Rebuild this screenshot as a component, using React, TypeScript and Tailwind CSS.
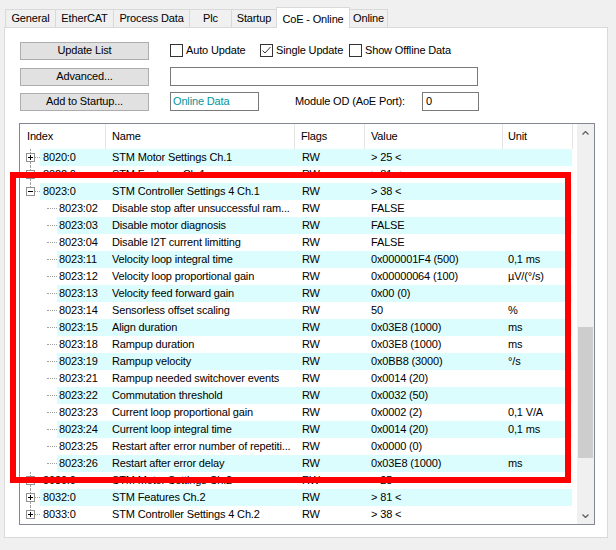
import React from "react";

type Row = {
  idx: string;
  name: string;
  value: string;
  unit?: string;
  level: 0 | 1;
  sign?: "+" | "-";
  up?: boolean;
  down?: boolean;
};

const rows: Row[] = [
  { idx: "8020:0", name: "STM Motor Settings Ch.1", value: "> 25 <", level: 0, sign: "+", up: true, down: true },
  { idx: "8022:0", name: "STM Features Ch.1", value: "> 81 <", level: 0, sign: "+", up: true, down: true },
  { idx: "8023:0", name: "STM Controller Settings 4 Ch.1", value: "> 38 <", level: 0, sign: "-", up: true },
  { idx: "8023:02", name: "Disable stop after unsuccessful ram...", value: "FALSE", level: 1 },
  { idx: "8023:03", name: "Disable motor diagnosis", value: "FALSE", level: 1 },
  { idx: "8023:04", name: "Disable I2T current limitting", value: "FALSE", level: 1 },
  { idx: "8023:11", name: "Velocity loop integral time", value: "0x000001F4 (500)", unit: "0,1 ms", level: 1 },
  { idx: "8023:12", name: "Velocity loop proportional gain", value: "0x00000064 (100)", unit: "µV/(°/s)", level: 1 },
  { idx: "8023:13", name: "Velocity feed forward gain", value: "0x00 (0)", level: 1 },
  { idx: "8023:14", name: "Sensorless offset scaling", value: "50", unit: "%", level: 1 },
  { idx: "8023:15", name: "Align duration", value: "0x03E8 (1000)", unit: "ms", level: 1 },
  { idx: "8023:18", name: "Rampup duration", value: "0x03E8 (1000)", unit: "ms", level: 1 },
  { idx: "8023:19", name: "Rampup velocity", value: "0x0BB8 (3000)", unit: "°/s", level: 1 },
  { idx: "8023:21", name: "Rampup needed switchover events", value: "0x0014 (20)", level: 1 },
  { idx: "8023:22", name: "Commutation threshold", value: "0x0032 (50)", level: 1 },
  { idx: "8023:23", name: "Current loop proportional gain", value: "0x0002 (2)", unit: "0,1 V/A", level: 1 },
  { idx: "8023:24", name: "Current loop integral time", value: "0x0014 (20)", unit: "0,1 ms", level: 1 },
  { idx: "8023:25", name: "Restart after error number of repetiti...", value: "0x0000 (0)", level: 1 },
  { idx: "8023:26", name: "Restart after error delay", value: "0x03E8 (1000)", unit: "ms", level: 1 },
  { idx: "8030:0", name: "STM Motor Settings Ch.2", value: "> 25 <", level: 0, sign: "+", up: true, down: true },
  { idx: "8032:0", name: "STM Features Ch.2", value: "> 81 <", level: 0, sign: "+", up: true, down: true },
  { idx: "8033:0", name: "STM Controller Settings 4 Ch.2", value: "> 38 <", level: 0, sign: "+", up: true },
];

const tabs = [
  { label: "General", w: "w-[50px]" },
  { label: "EtherCAT", w: "w-[58px]" },
  { label: "Process Data", w: "w-[76px]" },
  { label: "Plc", w: "w-[42px]" },
  { label: "Startup", w: "w-[45px]" },
];

function ExpandBox({ sign }: { sign: "+" | "-" }) {
  return (
    <svg width="9" height="9" viewBox="0 0 9 9" className="block">
      <rect x="0.5" y="0.5" width="8" height="8" fill="#fff" stroke="#919191" />
      <line x1="2" y1="4.5" x2="7" y2="4.5" stroke="#000" />
      {sign === "+" ? <line x1="4.5" y1="2" x2="4.5" y2="7" stroke="#000" /> : null}
    </svg>
  );
}

function Checkbox({ checked }: { checked?: boolean }) {
  return (
    <div className="w-[13px] h-[13px] border border-[#333333] bg-white shrink-0 flex items-center justify-center">
      {checked ? (
        <svg width="11" height="11" viewBox="0 0 11 11">
          <polyline points="1.5,5.5 4,8 9.5,2" fill="none" stroke="#333" strokeWidth="1" />
        </svg>
      ) : null}
    </div>
  );
}

function Button({ children }: { children: React.ReactNode }) {
  return (
    <div className="w-[129px] h-[18px] shrink-0 border border-[#adadad] bg-[#e1e1e1] flex items-center justify-center leading-none">
      {children}
    </div>
  );
}

function TreeGutter({ row }: { row: Row }) {
  if (row.level === 1) {
    return (
      <div className="w-[37px] h-[17px] shrink-0 flex items-center">
        <div className="ml-[27px] w-[10px] border-t border-dotted border-[#a0a0a0]" />
      </div>
    );
  }
  return (
    <div className="w-[20px] h-[17px] shrink-0 flex">
      <div className="ml-[6px] w-[9px] flex flex-col items-center">
        <div className={`h-[4px] w-0 ${row.up ? "border-l border-dotted border-[#a0a0a0]" : ""}`} />
        <ExpandBox sign={row.sign ?? "+"} />
        <div className={`h-[4px] w-0 ${row.down ? "border-l border-dotted border-[#a0a0a0]" : ""}`} />
      </div>
      <div className="flex items-center">
        <div className="w-[5px] border-t border-dotted border-[#a0a0a0]" />
      </div>
    </div>
  );
}

function Chevron({ down }: { down?: boolean }) {
  return (
    <svg width="7" height="4" viewBox="0 0 7 4">
      <polyline
        points={down ? "0.5,0.5 3.5,3.5 6.5,0.5" : "0.5,3.5 3.5,0.5 6.5,3.5"}
        fill="none"
        stroke="#606060"
        strokeWidth="1.3"
      />
    </svg>
  );
}

export default function App() {
  return (
    <div className="relative w-[616px] h-[550px] overflow-hidden bg-[#f0f0f0] text-[11px] text-black tracking-[-0.15px] font-['Liberation_Sans',Arial,sans-serif]">
      {/* tab strip */}
      <div className="flex items-end h-[27px] pl-[5px]">
        {tabs.map((t) => (
          <div
            key={t.label}
            className={`${t.w} h-[18px] border-l border-t border-[#d9d9d9] bg-[#f0f0f0] flex items-center justify-center`}
          >
            {t.label}
          </div>
        ))}
        <div className="relative z-10 w-[74px] h-[21px] -mb-[1px] border-x border-t border-[#d9d9d9] bg-white flex items-start justify-center pt-[3px]">
          CoE - Online
        </div>
        <div className="w-[38px] h-[18px] border-r border-t border-[#d9d9d9] bg-[#f0f0f0] flex items-center justify-center">
          Online
        </div>
      </div>

      {/* tab page */}
      <div className="ml-[4px] w-[604px] h-[511px] border border-[#d9d9d9] bg-white">
        <div className="pt-[13px] pl-[15px] flex flex-col">
          <div className="flex items-center h-[19px]">
            <Button>Update List</Button>
            <div className="ml-[21px] flex items-center w-[90px] gap-[3px]">
              <Checkbox />
              <span>Auto Update</span>
            </div>
            <div className="flex items-center w-[89px] gap-[3px]">
              <Checkbox checked />
              <span>Single Update</span>
            </div>
            <div className="flex items-center gap-[3px]">
              <Checkbox />
              <span>Show Offline Data</span>
            </div>
          </div>
          <div className="flex items-center h-[19px] mt-[7px]">
            <Button>Advanced...</Button>
            <div className="ml-[21px] w-[308px] h-[19px] border border-[#7a7a7a] bg-white" />
          </div>
          <div className="flex items-center h-[19px] mt-[6px]">
            <Button>Add to Startup...</Button>
            <div className="ml-[21px] w-[89px] h-[19px] border border-[#7a7a7a] bg-white flex items-center pl-[2px] text-[#0096a0]">
              Online Data
            </div>
            <div className="w-[163px] pl-[36px]">Module OD (AoE Port):</div>
            <div className="w-[57px] h-[19px] border border-[#7a7a7a] bg-white flex items-center pl-[3px]">
              0
            </div>
          </div>
        </div>

        {/* list view */}
        <div className="ml-[14px] mt-[12px] w-[576px] h-[402px] border border-[#828790] flex bg-white">
          <div className="w-[557px] flex flex-col overflow-hidden">
            <div className="h-[25px] shrink-0 flex">
              <div className="w-[86px] pl-[7px] border-r border-[#e5e5e5] flex items-center">Index</div>
              <div className="w-[189px] pl-[6px] border-r border-[#e5e5e5] flex items-center">Name</div>
              <div className="w-[70px] pl-[6px] border-r border-[#e5e5e5] flex items-center">Flags</div>
              <div className="w-[138px] pl-[6px] border-r border-[#e5e5e5] flex items-center">Value</div>
              <div className="w-[70px] pl-[5px] border-r border-[#e5e5e5] flex items-center">Unit</div>
            </div>
            {rows.map((r, i) => (
              <div key={r.idx} className="h-[17px] shrink-0 flex leading-[17px] whitespace-nowrap">
                <TreeGutter row={r} />
                <div className={`flex ${i % 2 === 0 ? "bg-[#dcfdfd]" : "bg-white"}`}>
                  <div className={r.level === 0 ? "w-[66px] pl-[3px]" : "w-[49px] pl-[2px]"}>{r.idx}</div>
                  <div className="w-[189px] pl-[6px] overflow-hidden">{r.name}</div>
                  <div className="w-[70px] pl-[7px]">RW</div>
                  <div className="w-[138px] pl-[6px]">{r.value}</div>
                  <div className="w-[69px] pl-[5px]">{r.unit ?? ""}</div>
                </div>
              </div>
            ))}
          </div>
          <div className="w-[17px] bg-[#f0f0f0] flex flex-col">
            <div className="h-[17px] flex items-center justify-center">
              <Chevron />
            </div>
            <div className="mt-[186px] mx-[1px] h-[131px] bg-[#cdcdcd]" />
            <div className="flex-1" />
            <div className="h-[17px] flex items-center justify-center">
              <Chevron down />
            </div>
          </div>
        </div>
      </div>

      {/* red highlight frame drawn over the list */}
      <div className="absolute left-[10px] top-[172px] w-[561px] h-[311px] border-[6px] border-[#ff0000] pointer-events-none" />
    </div>
  );
}
